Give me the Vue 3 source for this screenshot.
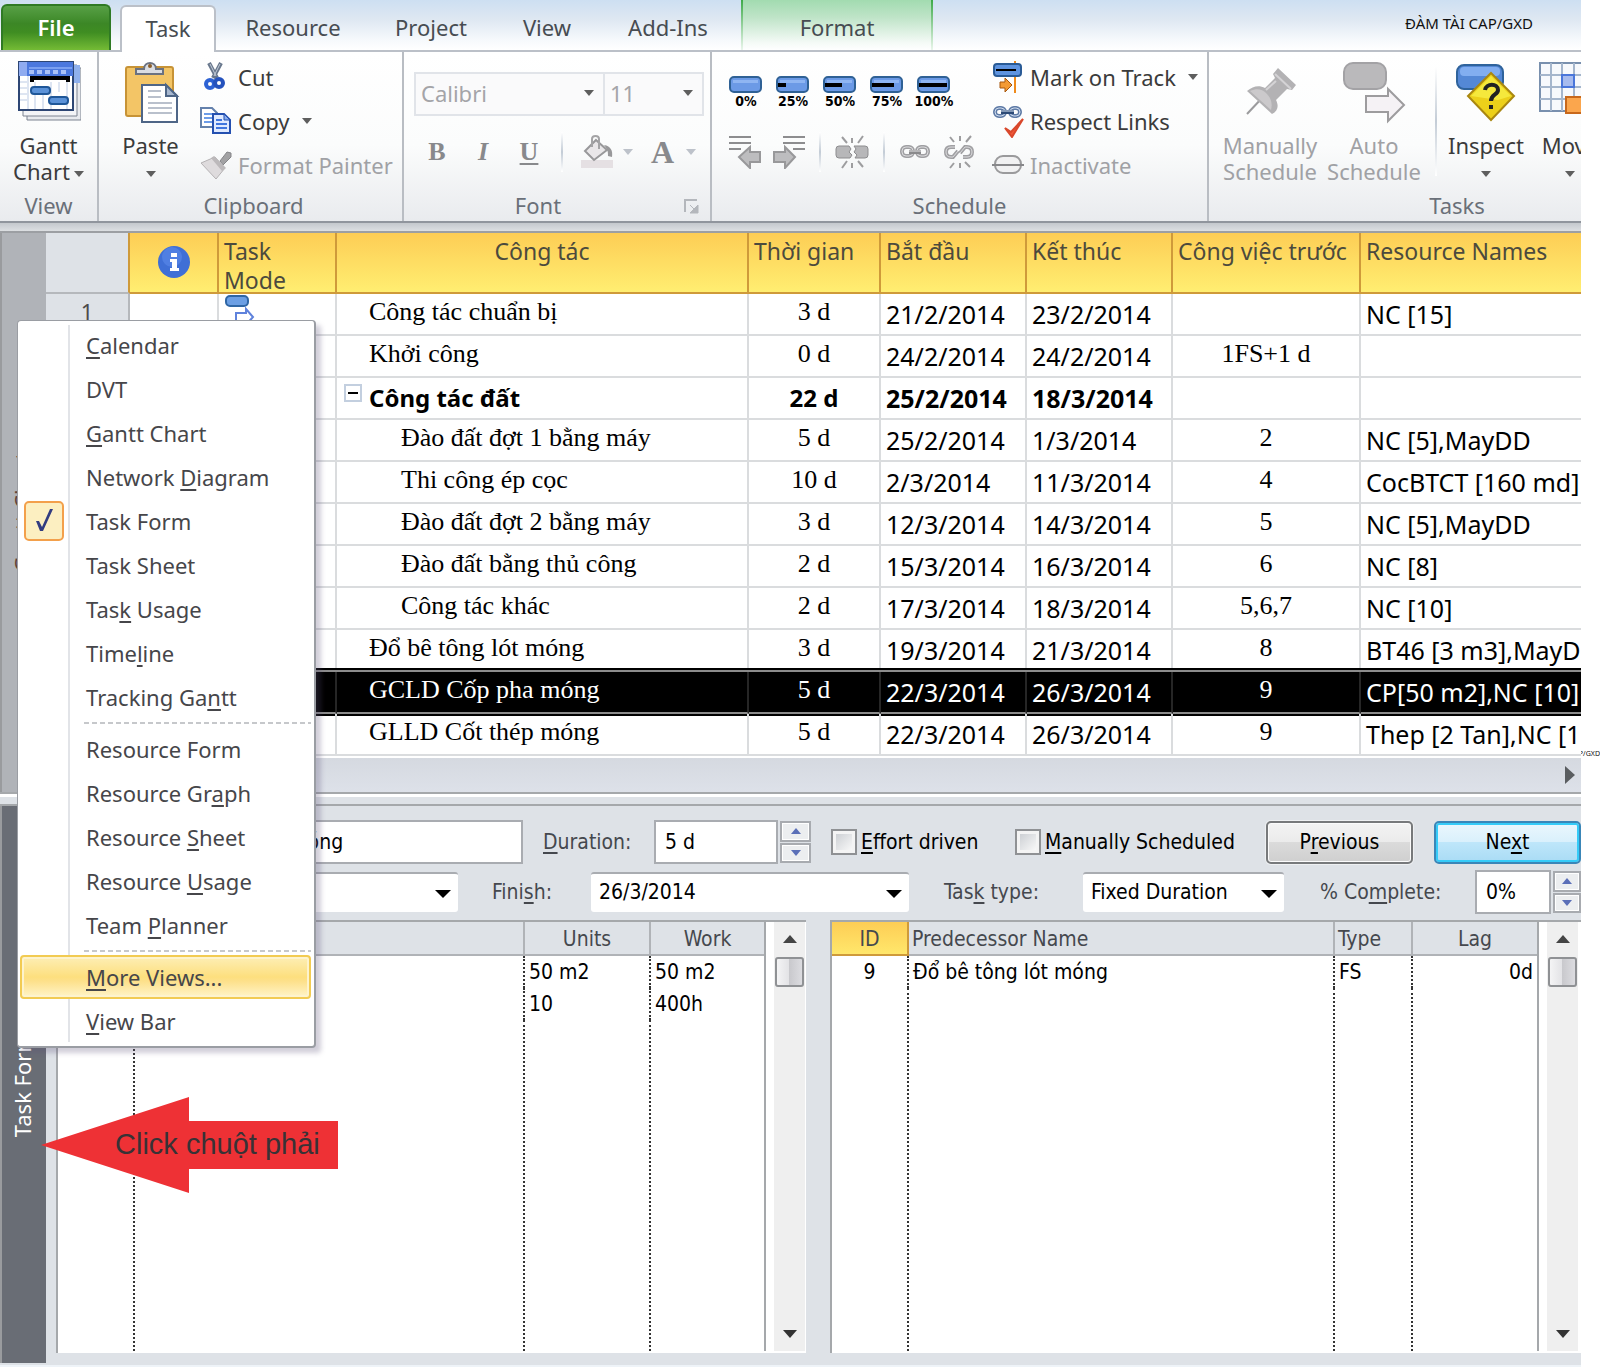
<script setup>
const tabs = [
  { label: 'Resource', width: 154 },
  { label: 'Project', width: 122 },
  { label: 'View', width: 110 },
  { label: 'Add-Ins', width: 132 }
]

const progress = [
  { label: '0%', bar: 0 },
  { label: '25%', bar: 8 },
  { label: '50%', bar: 17 },
  { label: '75%', bar: 22 },
  { label: '100%', bar: 28 }
]

const columns = [
  { key: 'info', label: '' },
  { key: 'mode', label: 'Task Mode' },
  { key: 'name', label: 'Công tác' },
  { key: 'duration', label: 'Thời gian' },
  { key: 'start', label: 'Bắt đầu' },
  { key: 'finish', label: 'Kết thúc' },
  { key: 'pred', label: 'Công việc trước' },
  { key: 'resources', label: 'Resource Names' }
]

const tasks = [
  { id: '1', name: 'Công tác chuẩn bị', level: 1, duration: '3 d', start: '21/2/2014', finish: '23/2/2014', pred: '', resources: 'NC [15]' },
  { name: 'Khởi công', level: 1, duration: '0 d', start: '24/2/2014', finish: '24/2/2014', pred: '1FS+1 d', resources: '' },
  { name: 'Công tác đất', level: 1, summary: true, duration: '22 d', start: '25/2/2014', finish: '18/3/2014', pred: '', resources: '' },
  { name: 'Đào đất đợt 1 bằng máy', level: 2, duration: '5 d', start: '25/2/2014', finish: '1/3/2014', pred: '2', resources: 'NC [5],MayDD' },
  { name: 'Thi công ép cọc', level: 2, duration: '10 d', start: '2/3/2014', finish: '11/3/2014', pred: '4', resources: 'CocBTCT [160 md]' },
  { name: 'Đào đất đợt 2 bằng máy', level: 2, duration: '3 d', start: '12/3/2014', finish: '14/3/2014', pred: '5', resources: 'NC [5],MayDD' },
  { name: 'Đào đất bằng thủ công', level: 2, duration: '2 d', start: '15/3/2014', finish: '16/3/2014', pred: '6', resources: 'NC [8]' },
  { name: 'Công tác khác', level: 2, duration: '2 d', start: '17/3/2014', finish: '18/3/2014', pred: '5,6,7', resources: 'NC [10]' },
  { name: 'Đổ bê tông lót móng', level: 1, duration: '3 d', start: '19/3/2014', finish: '21/3/2014', pred: '8', resources: 'BT46 [3 m3],MayDD' },
  { name: 'GCLD Cốp pha móng', level: 1, selected: true, duration: '5 d', start: '22/3/2014', finish: '26/3/2014', pred: '9', resources: 'CP[50 m2],NC [10]' },
  { name: 'GLLD Cốt thép móng', level: 1, duration: '5 d', start: '22/3/2014', finish: '26/3/2014', pred: '9', resources: 'Thep [2 Tan],NC [10]' }
]

// Each label is split as [before, access key, after].
const menuGroups = [
  [
    ['', 'C', 'alendar'], ['DVT', '', ''], ['', 'G', 'antt Chart'], ['Network ', 'D', 'iagram'],
    ['Task Form', '', ''], ['Task Sheet', '', ''], ['Tas', 'k', ' Usage'], ['Time', 'l', 'ine'], ['Tracking Ga', 'n', 'tt']
  ],
  [['Resource Form', '', ''], ['Resource Gr', 'a', 'ph'], ['Resource ', 'S', 'heet'], ['Resource ', 'U', 'sage'], ['Team ', 'P', 'lanner']],
  [['', 'M', 'ore Views...'], ['', 'V', 'iew Bar']]
]
</script>

<template>
  <div class="page">
    <main class="app">
      <nav class="tabs">
        <button class="file">File</button>
        <button class="tab active">Task</button>
        <button v-for="t in tabs" :key="t.label" class="tab" :style="{ width: t.width + 'px' }">{{ t.label }}</button>
        <button class="tab format">Format</button>
        <span class="author">ĐÀM TÀI CAP/GXD</span>
      </nav>

      <section class="ribbon">
        <div class="group g-view">
          <div class="tools">
            <button class="big">
              <svg width="64" height="64" viewBox="0 0 64 64">
                <path d="M10 8h54v52H10z" fill="#e8eaee" stroke="#7d8491" />
                <path d="M6 5h54v51H6z" fill="#f3f4f7" stroke="#7d8491" />
                <path d="M57 5h6v18h-6z" fill="#8fb0ec" />
                <path d="M2 2h54v48H2z" fill="#fff" stroke="#2d4674" stroke-width="2" />
                <path d="M2 2h54v14H2z" fill="#4b78de" />
                <path d="M2 2h8v14H2z" fill="#8fabf0" />
                <path d="M12 8h43" stroke="#7ba0f0" stroke-width="2" />
                <path d="M12 10h5v4h-5zM20 10h5v4h-5zM28 10h5v4h-5zM36 10h5v4h-5zM44 10h5v4h-5z" fill="#a9c1f7" />
                <path d="M11 16v33M18 22v27M26 30v19M34 22v27M42 22v10M50 22v27M3 22h7M3 28h7M3 34h7M3 40h7" stroke="#bccbe4" />
                <path d="M15 22v-4h36v4" fill="none" stroke="#000" stroke-width="4" />
                <rect x="14" y="27" width="19" height="7" rx="3" fill="#5b92d8" stroke="#1f5798" stroke-width="2" />
                <rect x="32" y="37" width="19" height="7" rx="3" fill="#5b92d8" stroke="#1f5798" stroke-width="2" />
              </svg>
              <span>Gantt</span><span>Chart<i class="caret beside"></i></span>
            </button>
          </div>
          <footer>View</footer>
        </div>

        <div class="group g-clip">
          <div class="tools">
            <button class="big paste">
              <svg width="64" height="64" viewBox="0 0 64 64">
                <rect x="7" y="7" width="47" height="49" rx="2" fill="#f3c566" stroke="#c79336" stroke-width="2" />
                <path d="M17 14v-5h8c0-8 12-8 12 0h7v5z" fill="#dadde2" stroke="#6b7280" stroke-width="2" />
                <circle cx="31" cy="6" r="2" fill="#8b5e2a" />
                <path d="M23 25h24l11 11v26H23z" fill="#fff" stroke="#4f6687" stroke-width="2" />
                <path d="M47 25v11h11z" fill="#a8b8d0" stroke="#4f6687" stroke-width="2" />
                <path d="M29 31h13M29 37h13M29 43h24M29 48h24M29 53h24" stroke="#b9c0cc" stroke-width="2" />
              </svg>
              <span>Paste</span><span><i class="caret"></i></span>
            </button>
            <div class="stack">
              <button class="small">
                <svg width="32" height="32" viewBox="0 0 32 32">
                  <path d="M9 2l8 15M21 2l-8 15" stroke="#68778c" stroke-width="4" />
                  <path d="M10 3l6 12M20 3l-6 12" stroke="#c3ccd8" />
                  <ellipse cx="10" cy="23" rx="4" ry="4" fill="none" stroke="#2d62d4" stroke-width="4" />
                  <ellipse cx="19" cy="22" rx="4" ry="4" fill="none" stroke="#2452bd" stroke-width="4" />
                </svg>Cut
              </button>
              <button class="small">
                <svg width="32" height="32" viewBox="0 0 32 32">
                  <path d="M1 3h11l5 5v14H1z" fill="#fff" stroke="#6481ac" stroke-width="2" />
                  <path d="M4 9h8M4 13h8M4 17h8" stroke="#6c9ce8" stroke-width="2" />
                  <path d="M13 9h11l6 6v13H13z" fill="#dfeaff" stroke="#2450b0" stroke-width="2" />
                  <path d="M24 9v6h6z" fill="#8aaef0" stroke="#2450b0" />
                  <path d="M16 15h6M16 19h11M16 23h11" stroke="#3f76de" stroke-width="2" />
                </svg>Copy<i class="caret gap"></i>
              </button>
              <button class="small off" disabled>
                <svg width="32" height="32" viewBox="0 0 32 32">
                  <path d="M20 12l7-9 4 1v4l-8 8z" fill="#a2a2a4" stroke="#858588" />
                  <path d="M1 14l14-6 10 11-9 11z" fill="#dedbdd" stroke="#b5b2b4" />
                  <path d="M14 7l12 12-4 3L11 9z" fill="#bcb9bb" />
                </svg>Format Painter
              </button>
            </div>
          </div>
          <footer>Clipboard</footer>
        </div>

        <div class="group g-font">
          <div class="tools fonts">
            <div class="combos">
              <label class="combo face"><select disabled aria-label="Font"><option>Calibri</option></select></label>
              <label class="combo size"><select disabled aria-label="Font size"><option>11</option></select></label>
            </div>
            <div class="format-row">
              <button class="glyph b" disabled>B</button>
              <button class="glyph i" disabled>I</button>
              <button class="glyph u" disabled>U</button>
              <i class="bar"></i>
              <button class="glyph fill" disabled aria-label="Background">
                <svg width="36" height="34" viewBox="0 0 36 34">
                  <path d="M2 25h32v8H2z" fill="#e5e0e3" />
                  <path d="M17 5l11 10-13 10L6 16z" fill="#e9e7e9" stroke="#98989a" stroke-width="2" />
                  <path d="M13 12V4c0-4 7-4 7 0v10" fill="none" stroke="#a4a4a6" stroke-width="2" />
                  <path d="M25 10c7 1 9 6 8 12l-4-1c0-4 0-6-4-11z" fill="#98989a" />
                </svg><i class="caret"></i>
              </button>
              <button class="glyph a" disabled>A<i class="caret"></i></button>
            </div>
          </div>
          <footer>Font
            <svg class="launcher" width="16" height="16" viewBox="0 0 16 16">
              <path d="M1 13V1h12" fill="none" stroke="#b4b7bc" stroke-width="2" />
              <path d="M6 6l6 6M14 6v8H6z" fill="#b4b7bc" stroke="#b4b7bc" />
            </svg>
          </footer>
        </div>

        <div class="group g-sched">
          <div class="tools">
            <div class="sched-icons">
              <div class="pcts">
                <button v-for="p in progress" :key="p.label" class="pct">
                  <svg width="34" height="18" viewBox="0 0 34 18">
                    <rect x="1" y="1" width="31" height="15" rx="4" fill="#6c9ae6" stroke="#2f6195" stroke-width="2" />
                    <path d="M4 4h25v3H4z" fill="#8fb5f2" />
                    <rect x="2" y="7" :width="p.bar" height="4" fill="#000" />
                  </svg>
                  <span>{{ p.label }}</span>
                </button>
              </div>
              <div class="links">
                <svg width="32" height="34" viewBox="0 0 32 34">
                  <path d="M0 2h22M0 8h22M0 14h12" stroke="#8d8d8f" stroke-width="2" />
                  <path d="M10 22l11-10v5h10v10H21v6z" fill="#bdbdbf" stroke="#98989a" stroke-width="2" />
                </svg>
                <svg class="second" width="32" height="34" viewBox="0 0 32 34">
                  <path d="M10 2h22M10 8h22M20 14h12" stroke="#8d8d8f" stroke-width="2" />
                  <path d="M22 22L12 12v5H1v10h11v6z" fill="#bdbdbf" stroke="#98989a" stroke-width="2" />
                </svg>
                <i class="bar"></i>
                <svg width="34" height="34" viewBox="0 0 34 34">
                  <path d="M4 11h10l2 3-2 3 3 3-2 3H4q-3 0-3-3v-6q0-3 3-3zM30 11H19l2 3-2 3 3 3-2 3h10q3 0 3-3v-6q0-3-3-3z" fill="#b7b7b9" stroke="#8d8d8f" />
                  <path d="M7 2l5 6M17 3v5M28 1l-5 7M7 33l5-7M17 28v5M28 32l-5-6" stroke="#9d9d9f" stroke-width="2" />
                </svg>
                <i class="bar"></i>
                <svg width="32" height="34" viewBox="0 0 32 34">
                  <g fill="none" stroke="#a0a0a3" stroke-width="4"><rect x="3" y="12" width="11" height="9" rx="4" /><rect x="18" y="12" width="11" height="9" rx="4" /></g>
                  <g fill="none" stroke="#dcdcde"><rect x="3" y="12" width="11" height="9" rx="4" /><rect x="18" y="12" width="11" height="9" rx="4" /></g>
                  <path d="M10 17h12" stroke="#8a8a8c" stroke-width="4" /><path d="M10 16h12" stroke="#e3e3e5" />
                </svg>
                <svg width="32" height="34" viewBox="0 0 32 34">
                  <g fill="none" stroke="#a0a0a3" stroke-width="4"><path d="M12 12H8q-5 0-5 5t5 5h2l5-6M20 22h4q5 0 5-5t-5-5h-2l-5 6" /></g>
                  <g fill="none" stroke="#dcdcde"><path d="M12 12H8q-5 0-5 5t5 5h2l5-6M20 22h4q5 0 5-5t-5-5h-2l-5 6" /></g>
                  <path d="M7 2l4 5M17 1v5M28 1l-5 6M7 33l4-5M17 28v5M27 32l-5-5" stroke="#9d9d9f" stroke-width="2" />
                </svg>
              </div>
            </div>
            <div class="stack">
              <button class="small">
                <svg width="32" height="34" viewBox="0 0 32 34">
                  <path d="M23 1v32" stroke="#ef8b1c" stroke-width="2" />
                  <rect x="2" y="4" width="27" height="12" rx="3" fill="#5f94e0" stroke="#2a5b96" stroke-width="2" />
                  <path d="M4 10h20" stroke="#000" stroke-width="2" />
                  <path d="M8 22h5v-4l7 7-7 7v-4H8z" fill="#f39a34" stroke="#a7560c" />
                </svg>Mark on Track<i class="caret gap"></i>
              </button>
              <button class="small">
                <svg width="32" height="34" viewBox="0 0 32 34">
                  <g fill="none" stroke="#5f7ba6" stroke-width="4"><rect x="3" y="4" width="10" height="8" rx="4" /><rect x="18" y="4" width="10" height="8" rx="4" /></g>
                  <g fill="none" stroke="#cfdcee"><rect x="3" y="4" width="10" height="8" rx="4" /><rect x="18" y="4" width="10" height="8" rx="4" /></g>
                  <path d="M9 8h13" stroke="#2c4a76" stroke-width="4" /><path d="M9 7h13" stroke="#dbe7f6" />
                  <path d="M13 24l6 4L31 15l-11 18z" fill="#f2593a" stroke="#d9482c" stroke-width="2" />
                </svg>Respect Links
              </button>
              <button class="small off" disabled>
                <svg width="32" height="32" viewBox="0 0 32 32">
                  <rect x="3" y="7" width="26" height="17" rx="8" fill="#f1f1f2" stroke="#9a9a9c" stroke-width="2" />
                  <path d="M0 16h32" stroke="#87878a" stroke-width="2" />
                </svg>Inactivate
              </button>
            </div>
          </div>
          <footer>Schedule</footer>
        </div>

        <div class="group g-tasks">
          <div class="tools">
            <button class="big off" disabled>
              <svg width="64" height="64" viewBox="0 0 64 64">
                <path d="M9 54L24 38" stroke="#9b9b9d" stroke-width="2" />
                <path d="M9 31c6-5 12-6 18-3l10-10-2-4 5-6 18 17-4 5-5-1-11 11c3 6 2 11-4 14z" fill="#b3b2b4" />
                <path d="M12 31c7-3 12-2 16 2s7 9 5 17z" fill="#cbc9cb" />
                <path d="M37 14l16 15M28 30l10-9" stroke="#d4d3d5" stroke-width="2" />
              </svg>
              <span>Manually</span><span>Schedule</span>
            </button>
            <button class="big off auto" disabled>
              <svg width="64" height="64" viewBox="0 0 64 64">
                <rect x="2" y="3" width="42" height="26" rx="9" fill="#bab9bb" stroke="#a3a2a5" stroke-width="2" />
                <path d="M24 36h22v-7l16 16-16 16v-9H24z" fill="#f5f2f5" stroke="#9d9c9e" stroke-width="2" />
              </svg>
              <span>Auto</span><span>Schedule</span>
            </button>
            <i class="divider"></i>
            <button class="big inspect">
              <svg width="64" height="64" viewBox="0 0 64 64">
                <rect x="3" y="5" width="46" height="24" rx="7" fill="#5488d6" stroke="#2f639c" stroke-width="2" />
                <rect x="6" y="7" width="40" height="9" rx="4" fill="#82aef0" />
                <path d="M37 13l23 23-23 24-23-24z" fill="#ecd01a" stroke="#a98710" stroke-width="2" />
                <path d="M37 16l20 20-13 4-27-4z" fill="#f5e83c" />
                <path d="M31 30c1-7 13-7 13 0 0 5-7 4-7 11M37 45v4" fill="none" stroke="#222" stroke-width="4" />
              </svg>
              <span>Inspect</span><span><i class="caret"></i></span>
            </button>
            <button class="big move">
              <svg width="64" height="64" viewBox="0 0 64 64">
                <path d="M2 3h58v48H2z" fill="#f7f9fc" stroke="#7990ae" stroke-width="2" />
                <path d="M13 3v48M24 3v48M36 3v48M48 3v48M2 15h58M2 27h58M2 39h58" stroke="#a5b6cc" stroke-width="2" />
                <path d="M24 15h12v12H24z" fill="#a7bbee" stroke="#4a76da" stroke-width="2" />
                <path d="M28 37h34v16H28z" fill="#fba64d" stroke="#c8681b" stroke-width="2" />
              </svg>
              <span>Move</span><span><i class="caret"></i></span>
            </button>
          </div>
          <footer>Tasks</footer>
        </div>
      </section>
      <div class="edge"></div>

      <section class="view">
        <aside class="side upper"><span>Gantt Chart</span></aside>
        <div class="sheet">
          <table class="grid">
            <colgroup>
              <col class="c-id" /><col v-for="c in columns" :key="c.key" :class="'c-' + c.key" />
            </colgroup>
            <thead>
              <tr>
                <td class="corner"></td>
                <th v-for="c in columns" :key="c.key" :class="'h-' + c.key">
                  <svg v-if="c.key === 'info'" width="34" height="34" viewBox="0 0 34 34">
                    <circle cx="17" cy="17" r="16" fill="#3f6fd6" />
                    <circle cx="15" cy="12" r="10" fill="#5b8aea" opacity=".6" />
                    <path d="M14 8h6v4h-6zM13 14h7v9h2v3h-9v-3h2v-6h-2z" fill="#fff" />
                  </svg>
                  <div v-else>{{ c.label }}</div>
                </th>
              </tr>
            </thead>
            <tbody>
              <tr v-for="t in tasks" :key="t.name" :class="{ summary: t.summary, selected: t.selected }">
                <th>{{ t.id }}</th>
                <td></td>
                <td class="mode">
                  <svg v-if="t.id" width="32" height="32" viewBox="0 0 32 32">
                    <rect x="2" y="2" width="22" height="10" rx="4" fill="#6c9fe4" stroke="#2f66a5" stroke-width="2" />
                    <path d="M12 32V19h10v-4l7 8-7 8" fill="#fff" stroke="#5f82dc" stroke-width="2" />
                  </svg>
                </td>
                <td class="name serif" :class="'level-' + t.level">
                  <button v-if="t.summary" class="toggle" aria-label="Collapse"></button>{{ t.name }}
                </td>
                <td class="serif mid">{{ t.duration }}</td>
                <td>{{ t.start }}</td>
                <td>{{ t.finish }}</td>
                <td class="serif mid">{{ t.pred }}</td>
                <td>{{ t.resources }}</td>
              </tr>
            </tbody>
          </table>
          <div class="hscroll"><i></i></div>
        </div>
      </section>
      <div class="splitter"></div>

      <section class="view form-view">
        <aside class="side lower"><span>Task Form</span></aside>
        <form class="form" @submit.prevent>
          <div class="row">
            <input class="box name-box" aria-label="Name" value="GCLD Cốp pha móng" />
            <label class="l-dur" for="f-dur"><u>D</u>uration:</label>
            <input id="f-dur" class="box dur-box" value="5 d" />
            <span class="spin"><button aria-label="Increase"><i></i></button><button aria-label="Decrease"><i class="down"></i></button></span>
            <label class="check effort"><input type="checkbox" /><span><u>E</u>ffort driven</span></label>
            <label class="check"><input type="checkbox" /><span><u>M</u>anually Scheduled</span></label>
            <button class="push prev">P<u>r</u>evious</button>
            <button class="push next">Ne<u>x</u>t</button>
          </div>
          <div class="row second">
            <span class="drop start"><select aria-label="Start"><option></option></select></span>
            <label class="l-fin" for="f-fin">Fini<u>s</u>h:</label>
            <span class="drop finish"><select id="f-fin"><option>26/3/2014</option></select></span>
            <label class="l-type" for="f-type">Tas<u>k</u> type:</label>
            <span class="drop type"><select id="f-type"><option>Fixed Duration</option></select></span>
            <label class="l-pct" for="f-pct">% Co<u>m</u>plete:</label>
            <input id="f-pct" class="box pct-box" value="0%" />
            <span class="spin"><button aria-label="Increase"><i></i></button><button aria-label="Decrease"><i class="down"></i></button></span>
          </div>
          <div class="panels">
            <div class="panel left">
              <table>
                <colgroup><col class="w-id" /><col /><col class="w-units" /><col class="w-work" /></colgroup>
                <thead><tr><th></th><th></th><th>Units</th><th>Work</th></tr></thead>
                <tbody>
                  <tr><td></td><td></td><td>50 m2</td><td>50 m2</td></tr>
                  <tr><td></td><td></td><td>10</td><td>400h</td></tr>
                  <tr class="rest"><td></td><td></td><td></td><td></td></tr>
                </tbody>
              </table>
              <div class="vscroll"><i class="up"></i><b></b><i class="down"></i></div>
            </div>
            <div class="panel right">
              <table>
                <colgroup><col class="w-id" /><col /><col class="w-type" /><col class="w-lag" /></colgroup>
                <thead><tr><th class="hot">ID</th><th class="first">Predecessor Name</th><th class="first">Type</th><th>Lag</th></tr></thead>
                <tbody>
                  <tr><td class="mid">9</td><td>Đổ bê tông lót móng</td><td>FS</td><td class="end">0d</td></tr>
                  <tr class="rest tall"><td></td><td></td><td></td><td></td></tr>
                </tbody>
              </table>
              <div class="vscroll"><i class="up"></i><b></b><i class="down"></i></div>
            </div>
          </div>
        </form>
      </section>

      <div class="menu" role="menu">
        <div v-for="(group, g) in menuGroups" :key="g" class="menu-group">
          <button
            v-for="item in group" :key="item.join('')" role="menuitem"
            :class="{ checked: item[0] === 'Task Form', hot: item[2] === 'ore Views...' }"
          >
            <span class="gutter">
              <svg v-if="item[0] === 'Task Form'" width="40" height="40" viewBox="0 0 40 40">
                <rect x="1" y="1" width="38" height="38" rx="4" fill="#fcefc1" stroke="#f3a04b" stroke-width="2" />
                <path d="M12 20h3l3 6L26 8h3L19 30h-3z" fill="#323c80" />
              </svg>
            </span>
            <span class="text">{{ item[0] }}<u>{{ item[1] }}</u>{{ item[2] }}</span>
          </button>
        </div>
      </div>

      <div class="callout">
        <svg width="298" height="96" viewBox="0 0 298 96"><path d="M0 48L148 0v24h149v48H148v24z" fill="#ee3135" /></svg>
        <span>Click chuột phải</span>
      </div>
    </main>
    <span class="stamp">P/GXD</span>
  </div>
</template>

<style>
body { margin: 0; background: #fff; }
</style>

<style scoped>
.page { position: relative; padding-right: 19px; font-family: "Noto Sans", "Open Sans", sans-serif; font-size: 22px; color: #3b3b3b; overflow: hidden; }
.page *, .page *::before, .page *::after { box-sizing: border-box; }
.app { position: relative; overflow: hidden; background: #dee2e7; padding-bottom: 12px; border-bottom: 2px solid #eef3f8; }
button { font: inherit; color: inherit; background: none; border: 0; padding: 0; margin: 0; white-space: nowrap; }
input, select { font: inherit; color: inherit; margin: 0; }
svg { display: block; flex: none; }
u { text-decoration-thickness: 2px; text-underline-offset: 3px; text-decoration-skip-ink: none; }

.tabs { display: flex; align-items: flex-end; height: 52px; border-bottom: 2px solid #bbc0c8; background: linear-gradient(#cddff2, #dfe8f2 40%, #f6f9fc 80%, #fff); }
.file { width: 110px; height: 46px; margin: 0 9px 0 1px; padding-bottom: 2px; border: 2px solid #2f7a24; border-bottom: 0; border-radius: 6px 6px 0 0; background: linear-gradient(#57a046, #3c8726 40%, #3f8d22 60%, #74bb35); color: #fff; font-weight: 600; }
.tab { height: 50px; padding-top: 3px; color: #474c52; flex: none; }
.active { width: 96px; height: 47px; padding: 0 0 4px; margin-bottom: -2px; border: 2px solid #bbc0c8; border-bottom: 0; border-radius: 6px 6px 0 0; background: #fff; }
.format { width: 192px; margin-left: 7px; border: solid transparent; border-width: 0 2px; border-image: linear-gradient(#39a845, #eef8f0) 1; background: linear-gradient(#a2dbb0, #bfe4c8 35%, #f4faf6 85%, #fff); }
.author { margin: 0 48px 17px auto; font-size: 15px; line-height: 20px; color: #111; }

.ribbon { display: flex; height: 169px; background: linear-gradient(#fff, #fbfcfc 55%, #e9ebee); overflow: hidden; }
.edge { height: 12px; border-top: 2px solid #90959d; border-bottom: 2px solid #9c9fa3; background: linear-gradient(#c4c8cd, #dcdfe2); }
.group { display: flex; flex-direction: column; flex: none; border-right: 2px solid #b9bdc3; }
.tools { display: flex; height: 138px; }
.group footer { position: relative; height: 30px; line-height: 30px; text-align: center; color: #6a7079; }
.g-view { width: 99px; }
.g-clip { width: 305px; }
.g-clip footer { padding-left: 6px; }
.g-font { width: 308px; }
.g-font footer { padding-right: 38px; }
.g-sched { width: 497px; }
.g-tasks { width: 498px; }
.big { display: flex; flex-direction: column; align-items: center; width: 98px; padding-top: 8px; line-height: 26px; }
.big svg { margin-bottom: 8px; }
.big span { height: 26px; }
.paste { width: 103px; }
.paste + .stack { margin-left: -2px; }
.stack { padding-top: 3px; }
.small { display: flex; align-items: center; gap: 6px; height: 44px; }
.off, .off span { color: #a0a1a5; }
.caret { display: inline-block; border: solid transparent; border-width: 6px 5px 0; border-top-color: #5e5e5e; vertical-align: middle; }
.beside { margin-left: 4px; }
.gap { margin-left: 6px; }

.fonts { flex-direction: column; padding: 20px 7px 0 10px; }
.combos { display: flex; }
.combo { position: relative; flex: none; height: 44px; border: 2px solid #e1e4e9; background: #fafafb; }
.face { width: 191px; }
.size { width: 101px; margin-left: -2px; }
.combo::after { content: ""; position: absolute; right: 9px; top: 16px; border: solid transparent; border-width: 6px 5px 0; border-top-color: #5e5e5e; }
select { appearance: none; border: 0; background: none; width: 100%; height: 100%; opacity: 1; }
.combo select { padding: 0 5px 2px; color: #a4a4a8; }
.format-row { display: flex; align-items: center; height: 72px; }
.glyph { flex: none; width: 46px; font-family: "Liberation Serif", serif; font-weight: 700; font-size: 26px; color: #88898c; }
.i { font-style: italic; }
.u { text-decoration: underline; text-decoration-thickness: 2px; text-underline-offset: 3px; margin-right: 9px; }
.bar { flex: none; width: 2px; height: 40px; background: linear-gradient(#fff, #c3ccd6, #fff); }
.fill, .a { display: flex; align-items: center; gap: 8px; width: 56px; margin-left: 16px; }
.a { margin-left: 16px; font-size: 32px; gap: 12px; }
.glyph .caret { border-top-color: #bdc2ca; }
.launcher { position: absolute; right: 10px; top: 9px; }

.sched-icons { width: 280px; padding: 24px 0 0 17px; }
.pcts { display: flex; gap: 13px; height: 44px; }
.pct { width: 34px; display: flex; flex-direction: column; align-items: center; font-family: "DejaVu Sans Condensed", "DejaVu Sans", sans-serif; font-weight: 700; font-size: 14px; line-height: 15px; color: #000; }
.links { display: flex; align-items: center; height: 64px; }
.links .second { margin-left: 12px; }
.links .bar { margin: 0 14px; }
.links svg + svg:last-child { margin-left: 12px; }

.g-tasks .big { width: 104px; }
.g-tasks .big:first-child { margin-left: 9px; }
.divider { width: 2px; height: 110px; margin: 14px 0 0 9px; background: linear-gradient(#fff, #c3ccd6, #fff); }
.g-tasks .inspect { width: 98px; }
.g-tasks .move { width: 70px; }

.view { display: flex; }
.side { flex: none; width: 46px; display: flex; align-items: center; justify-content: center; padding-right: 4px; border-left: 2px solid #999b9e; }
.side span { writing-mode: vertical-rl; transform: rotate(180deg); font-size: 22px; line-height: 26px; }
.upper { background: #b0b3b8; color: #5f4438; }
.lower { background: #696d75; color: #fff; margin-bottom: -10px; }
.sheet { flex: 1; min-width: 0; }
.grid { table-layout: fixed; width: 100%; border-collapse: separate; border-spacing: 0; background: #fff; border-bottom: 2px solid #fff; }
.c-id { width: 84px; }
.c-info { width: 89px; }
.c-mode { width: 118px; }
.c-name { width: 412px; }
.c-duration { width: 132px; }
.c-start, .c-finish { width: 146px; }
.c-pred { width: 188px; }
.grid thead th { height: 61px; padding: 4px 5px 0; vertical-align: top; text-align: left; font-weight: 400; font-size: 23px; line-height: 29px; color: #4c4a3d; border-right: 2px solid #cf9a3a; border-bottom: 2px solid #cf9a3a; background: linear-gradient(#fdcd55, #ffee71); }
.grid thead th div { height: 55px; }
.grid thead th:nth-child(n+4) { white-space: nowrap; }
.grid thead .h-name { text-align: center; }
.grid thead .h-info { padding-top: 12px; }
.h-info svg { margin: 0 auto; }
.corner { background: #dee2e7; border-right: 2px solid #cf9a3a; border-bottom: 2px solid #b5b8bc; }
tbody th { font-weight: 400; background: #dee2e7; border-right: 2px solid #b5b8bc; border-bottom: 1px solid #b5b8bc; line-height: 33px; vertical-align: top; color: #4b4b4b; }
.grid tbody td { height: 42px; padding: 0 5px; border-right: 2px solid #dadcde; border-bottom: 2px solid #dadcde; font-size: 25px; line-height: 40px; color: #000; white-space: nowrap; overflow: hidden; }
.grid thead th:last-child, .grid tbody td:last-child { border-right: 0; }
.grid tbody td.serif { font-family: "Liberation Serif", "Times New Roman", serif; font-size: 26px; line-height: 36px; padding-bottom: 4px; }
.grid tbody td.mid { text-align: center; }
.grid tbody td.mode { padding: 0 5px; vertical-align: top; }
.grid tbody td.level-1 { padding-left: 32px; }
.grid tbody td.level-2 { padding-left: 64px; }
.grid .summary td, .grid tbody .summary td.serif { font-family: "Noto Sans", "Open Sans", sans-serif; line-height: 40px; padding-bottom: 0; font-weight: 700; }
.grid tbody .summary td.serif { font-size: 24px; }
.name { position: relative; }
.toggle { position: absolute; left: 7px; top: 6px; width: 18px; height: 18px; border: 2px solid #c3cfdf; background: linear-gradient(#000, #000) center / 10px 2px no-repeat #fff; }
.grid .selected td { background: #000; color: #fff; border-color: #000; border-bottom-color: #8c8c8c; box-shadow: 0 -2px 0 #8c8c8c, 0 -4px 0 #000, 0 2px 0 #000; }
.grid .selected td + td { border-right-color: #262626; }
.hscroll { height: 34px; display: flex; align-items: center; justify-content: flex-end; padding-right: 6px; background: linear-gradient(#d5d9e0, #dde1e9); }
.hscroll i { border: solid transparent; border-width: 9px 0 9px 10px; border-left-color: #5a5d60; }
.splitter { height: 14px; border: solid #a5a8ab; border-width: 2px 0; background: linear-gradient(#fff 3px, #dee2e7 3px); }

.form { flex: 1; min-width: 0; padding: 14px 0 0 10px; font-family: "DejaVu Sans Condensed", "Noto Sans", sans-serif; font-size: 21px; color: #000; }
.row { display: flex; align-items: center; height: 44px; padding-left: 80px; }
.row.second { margin-top: 6px; }
.row > label:not(.check) { color: #45484e; }
.row > *, .panel > * { flex: none; }
.box { height: 44px; padding: 0 9px; border: 2px solid #a9acb1; background: #fff; outline: 0; }
.name-box { width: 387px; padding-left: 8px; }
.l-dur { width: 131px; padding-left: 20px; }
.dur-box { width: 124px; }
.spin { width: 31px; height: 42px; margin-left: 2px; display: flex; flex-direction: column; gap: 1px; }
.spin button { flex: 1; display: flex; align-items: center; justify-content: center; border: 2px solid #a8abb0; background: #eceef0; box-shadow: inset 0 0 0 1px #fff; }
.spin i { border: solid transparent; border-width: 0 5px 6px; border-bottom-color: #5a6fb8; }
.spin .down { border-width: 6px 5px 0; border-top-color: #5a6fb8; }
.check { display: flex; align-items: center; gap: 4px; white-space: nowrap; }
.check input { appearance: none; width: 26px; height: 26px; border: 2px solid #8f9194; background: linear-gradient(135deg, #cdd0d4, #f8f8f8) center / 16px 16px no-repeat #f4f4f4; }
.effort { width: 184px; margin-left: 20px; }
.push { width: 147px; height: 43px; border: 2px solid #77797b; border-radius: 5px; box-shadow: inset 0 0 0 1px #fbfbfb, 0 0 0 1px #eef0f2; background: linear-gradient(#f3f3f3, #ebebeb 50%, #dbdbdb 50%, #cfcfcf); }
.prev { margin-left: auto; }
.next { margin-left: 21px; border-color: #3a86b8; box-shadow: inset 0 0 0 2px #35cbf8; background: linear-gradient(#ebf7fd, #d9f0fc 50%, #bee6fa 50%, #a9dcf5); }
.drop { position: relative; height: 40px; border-top: 2px solid #a9acb1; border-radius: 3px; background: #fff; }
.drop::after { content: ""; position: absolute; right: 7px; top: 16px; border: solid transparent; border-width: 8px 8px 0; border-top-color: #000; pointer-events: none; }
.drop select { padding: 0 8px 2px; }
.start.drop { width: 322px; }
.l-fin { width: 133px; padding-left: 34px; }
.drop.finish { width: 318px; }
.l-type { width: 174px; padding-left: 35px; }
.drop.type { width: 201px; }
.l-pct { padding-left: 36px; }
.pct-box { width: 76px; margin-left: auto; }
.second .spin { width: 28px; }

.panels { display: flex; gap: 24px; margin-top: 6px; }
.panel { display: flex; background: #fff; border-left: 2px solid #a5a8ab; border-top: 2px solid #a5a8ab; min-width: 0; padding-bottom: 2px; }
.left { width: 750px; }
.right { flex: 1; padding-right: 3px; }
.panel table { flex: 1; min-width: 0; table-layout: fixed; border-collapse: separate; border-spacing: 0; border-right: 2px solid #a5a8ab; }
.panel th { height: 34px; padding: 2px 3px 0; font-weight: 400; color: #45484e; background: #dee2e7; border-bottom: 2px solid #b0b3b7; border-right: 2px solid #b0b3b7; }
.panel th:last-child { border-right: 0; }
.panel th.first { text-align: left; }
.panel th.hot { background: linear-gradient(#fdcd55, #ffe76b); border-color: #cf9a3a; }
.panel td { height: 32px; padding: 0 4px; line-height: 28px; border-right: 2px dotted #333; }
.panel td:last-child { border-right: 0; }
.panel .mid { text-align: center; }
.panel .end { text-align: right; }
.panel .rest td { height: 331px; }
.panel .tall td { height: 363px; }
.w-id { width: 77px; }
.w-units { width: 126px; }
.w-work { width: 113px; }
.w-type { width: 78px; }
.w-lag { width: 124px; }
.vscroll { width: 31px; margin: 0 1px 0 8px; display: flex; flex-direction: column; align-items: center; background: #efefef; }
.vscroll b { width: 29px; height: 30px; border: 2px solid #8f9194; border-radius: 3px; background: linear-gradient(90deg, #f4f4f5, #e2e2e5 50%, #c9c9cd 50%, #dcdce0); }
.vscroll .up { margin: 13px 0 14px; border: solid transparent; border-width: 0 7px 8px; border-bottom-color: #444; }
.vscroll .down { margin: auto 0 13px; border: solid transparent; border-width: 8px 7px 0; border-top-color: #333; }
.right .vscroll { margin-right: 0; }

.menu { position: absolute; left: 17px; top: 320px; width: 299px; padding: 2px 3px 3px 2px; border: 1px solid #9a9da3; border-right-width: 2px; border-bottom-width: 2px; border-radius: 4px; box-shadow: 5px 5px 5px rgba(90, 80, 120, .28); background: linear-gradient(#e2e4e8, #e2e4e8) 50px 4px / 2px calc(100% - 8px) no-repeat #fff; }
.menu button { display: flex; align-items: center; width: 100%; height: 44px; text-align: left; color: #46464a; }
.menu-group + .menu-group { padding-top: 8px; background: repeating-linear-gradient(90deg, #c6c8cb 0 5px, transparent 5px 8px) 64px 3px / 230px 2px no-repeat; }
.gutter { width: 66px; padding-left: 4px; }
.text { white-space: pre; }
.menu .hot { border: 2px solid #f2cb52; border-radius: 4px; box-shadow: inset 0 0 0 2px #fdf3cd; background: linear-gradient(#fdeeb5, #fddf7e 50%, #fde08a 60%, #fff4c8); }
.menu .hot .gutter { width: 64px; }

.callout { position: absolute; left: 41px; top: 1097px; }
.callout span { position: absolute; left: 74px; top: 30px; font: 29px/34px "Liberation Sans", Arial, sans-serif; color: #383236; white-space: nowrap; }
.stamp { position: absolute; right: 0; top: 748px; width: 19px; display: flex; justify-content: flex-end; overflow: hidden; font-size: 7px; line-height: 12px; color: #111; }
</style>
